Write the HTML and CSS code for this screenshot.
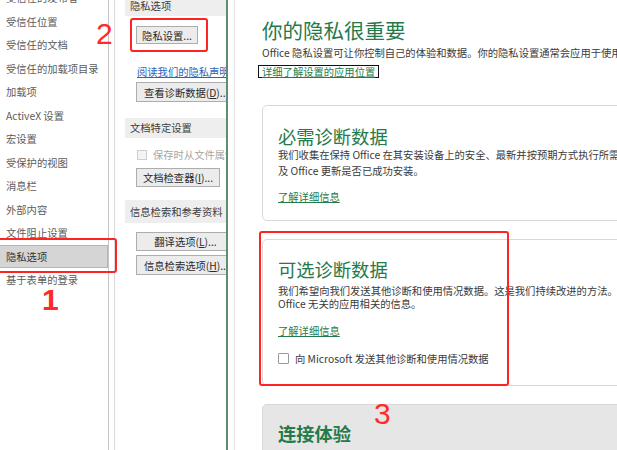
FILE: index.html
```html
<!DOCTYPE html>
<html lang="zh-CN">
<head>
    <meta charset="UTF-8">
    <title>信任中心 - 隐私选项</title>
    <link rel="stylesheet" href="styles.css">
</head>
<body>
    <div class="window">
        <ul class="nav">
            <li>受信任的发布者</li>
            <li>受信任位置</li>
            <li>受信任的文档</li>
            <li>受信任的加载项目录</li>
            <li>加载项</li>
            <li>ActiveX 设置</li>
            <li>宏设置</li>
            <li>受保护的视图</li>
            <li>消息栏</li>
            <li>外部内容</li>
            <li>文件阻止设置</li>
            <li class="active">隐私选项</li>
            <li>基于表单的登录</li>
        </ul>

        <div class="options">
            <div class="group-title first">隐私选项</div>
            <button class="btn btn-privacy">隐私设置...</button>
            <a class="privacy-link">阅读我们的隐私声明</a>
            <button class="btn btn-diag">查看诊断数据(<u>D</u>)...</button>

            <div class="group-title">文档特定设置</div>
            <label class="check-disabled"><span class="box"></span>保存时从文件属性中删除个人信息</label>
            <button class="btn btn-inspect">文档检查器(<u>I</u>)...</button>

            <div class="group-title tall">信息检索和参考资料</div>
            <button class="btn btn-translate">翻译选项(<u>L</u>)...</button>
            <button class="btn btn-research">信息检索选项(<u>H</u>)...</button>
        </div>

        <div class="dialog">
            <div class="dialog-body">
                <h1 class="dialog-title">你的隐私很重要</h1>
                <p class="intro">Office 隐私设置可让你控制自己的体验和数据。你的隐私设置通常会应用于使用此帐户的所有设备</p>
                <a class="focus-link">详细了解设置的应用位置</a>

                <div class="card card-required">
                    <h2 class="card-title">必需诊断数据</h2>
                    <p class="card-text">我们收集在保持 Office 在其安装设备上的安全、最新并按预期方式执行所需的数据<br>及 Office 更新是否已成功安装。</p>
                    <a class="more-link">了解详细信息</a>
                </div>

                <div class="card card-optional">
                    <h2 class="card-title">可选诊断数据</h2>
                    <p class="card-text">我们希望向我们发送其他诊断和使用情况数据。这是我们持续改进的方法。这些数据与<br>Office 无关的应用相关的信息。</p>
                    <a class="more-link">了解详细信息</a>
                    <label class="check"><span class="box"></span>向 Microsoft 发送其他诊断和使用情况数据</label>
                </div>

                <div class="card card-connected">
                    <h2 class="card-title bold">连接体验</h2>
                </div>
            </div>
        </div>

        <!-- annotation marks -->
        <div class="mark mark-nav"></div>
        <div class="mark mark-btn"></div>
        <div class="mark mark-card"></div>
        <span class="step step-1">1</span>
        <span class="step step-2">2</span>
        <span class="step step-3">3</span>
    </div>
</body>
</html>
```

FILE: styles.css
```css
* {
    margin: 0;
    padding: 0;
    box-sizing: border-box;
}

body {
    width: 617px;
    height: 450px;
    overflow: hidden;
    background: #fff;
    font-family: "Noto Sans CJK SC", "Microsoft YaHei", sans-serif;
    font-size: 10.3px;
    color: #444;
}

.window {
    position: relative;
    display: flex;
    height: 450px;
}

/* left navigation */
.nav {
    list-style: none;
    width: 109px;
    flex-shrink: 0;
    border-right: 1px solid #c4c4c4;
    margin-top: -13.7px;
}

.nav li {
    height: 23.5px;
    line-height: 23.5px;
    padding-left: 6px;
    color: #5c5c5c;
    white-space: nowrap;
}

.nav li.active {
    background: #d5d5d5;
    border: 1px solid #b4b4b4;
    border-left: none;
    line-height: 21.5px;
    color: #333;
}

/* middle options */
.options {
    width: 112px;
    flex-shrink: 0;
    margin-left: 5px;
    border-left: 1px solid #dadada;
    overflow: hidden;
    white-space: nowrap;
    display: flex;
    flex-direction: column;
    align-items: flex-start;
}

.group-title {
    align-self: stretch;
    margin-left: 10px;
    margin-top: 16px;
    height: 20px;
    line-height: 20px;
    padding-left: 5px;
    background: #eeeeee;
    color: #3c3c3c;
}

.group-title.first {
    margin-top: -4px;
}

.group-title.tall {
    margin-top: 13px;
    height: 23px;
    line-height: 23px;
}

.btn {
    margin-left: 21px;
    height: 19px;
    font-family: inherit;
    font-size: 10.3px;
    color: #2b2b2b;
    background: #ececec;
    border: 1px solid #adadad;
    text-align: center;
    white-space: nowrap;
    flex-shrink: 0;
}

.btn u {
    text-decoration: underline;
}

.btn-privacy {
    margin-top: 10px;
    width: 62px;
    height: 18px;
}

.privacy-link {
    margin-top: 20px;
    margin-left: 22px;
    line-height: 15px;
    color: #2e63b8;
    text-decoration: underline;
}

.btn-diag {
    margin-top: 3px;
    width: 100px;
    height: 20px;
    text-align: left;
    padding-left: 7px;
}

.check-disabled {
    margin-top: 10px;
    margin-left: 22px;
    height: 14px;
    line-height: 14px;
    display: flex;
    align-items: center;
    color: #a6a6a6;
}

.check-disabled .box {
    width: 10px;
    height: 10px;
    border: 1px solid #cfcfcf;
    background: #f4f4f4;
    margin-right: 6px;
}

.btn-inspect {
    margin-top: 6px;
    width: 84px;
}

.btn-translate {
    margin-top: 9px;
    width: 99px;
}

.btn-research {
    margin-top: 4px;
    width: 99px;
    height: 20px;
    text-align: left;
    padding-left: 7px;
}

/* privacy dialog */
.dialog {
    flex: 1;
    min-width: 0;
    background: #fff;
    border-left: 2px solid #5e8e6f;
    overflow: hidden;
}

.dialog-body {
    margin-left: 6px;
    height: 100%;
    border-left: 1px solid #e2e2e2;
    padding-left: 27px;
    padding-top: 17px;
    white-space: nowrap;
}

.dialog-title {
    font-size: 20.5px;
    line-height: 26px;
    font-weight: normal;
    color: #257a4b;
}

.intro {
    margin-top: 2px;
    line-height: 15px;
    color: #3a3a3a;
}

.focus-link {
    display: inline-block;
    margin-top: 5px;
    margin-left: -4px;
    height: 13px;
    line-height: 11px;
    padding: 0 3px;
    border: 1px solid #111;
    color: #257a4b;
    text-decoration: underline;
}

.card {
    width: 420px;
    margin-top: 18px;
    border: 1px solid #d8d8d8;
    border-radius: 5px;
    padding: 0 16px 0 15px;
}

.card-required {
    margin-top: 26px;
    padding-top: 19px;
    padding-bottom: 16px;
}

.card-optional {
    padding-top: 18px;
    padding-bottom: 19px;
}

.card-connected {
    padding-top: 17px;
    height: 60px;
    background: #e6e6e6;
}

.card-title {
    font-size: 18.3px;
    line-height: 22px;
    font-weight: normal;
    color: #257a4b;
}

.card-title.bold {
    font-weight: bold;
}

.card-text {
    line-height: 15.5px;
    color: #3a3a3a;
}

.card-optional .card-text {
    margin-top: 4px;
    line-height: 13px;
}

.more-link {
    display: block;
    margin-top: 11px;
    line-height: 15px;
    color: #257a4b;
    text-decoration: underline;
}

.card-optional .more-link {
    margin-top: 13px;
}

.check {
    margin-top: 13px;
    height: 15px;
    display: flex;
    align-items: center;
    color: #3a3a3a;
}

.check .box {
    width: 11px;
    height: 11px;
    border: 1px solid #9a9a9a;
    border-radius: 1px;
    background: #fff;
    margin-right: 6px;
}

/* red annotation marks */
.mark {
    position: absolute;
    border: 2px solid #ff2424;
    border-radius: 3px;
}

.mark-nav {
    left: -4px;
    top: 238px;
    width: 121px;
    height: 35px;
}

.mark-btn {
    left: 130px;
    top: 18px;
    width: 78px;
    height: 34px;
}

.mark-card {
    left: 259px;
    top: 231px;
    width: 250px;
    height: 155px;
}

.step {
    position: absolute;
    font-family: "Liberation Sans", Arial, sans-serif;
    font-size: 30px;
    line-height: 30px;
    color: #ff2a2a;
}

.step-1 {
    left: 42px;
    top: 285px;
    font-weight: bold;
}

.step-2 {
    left: 96px;
    top: 19px;
}

.step-3 {
    left: 374px;
    top: 399px;
}
```
